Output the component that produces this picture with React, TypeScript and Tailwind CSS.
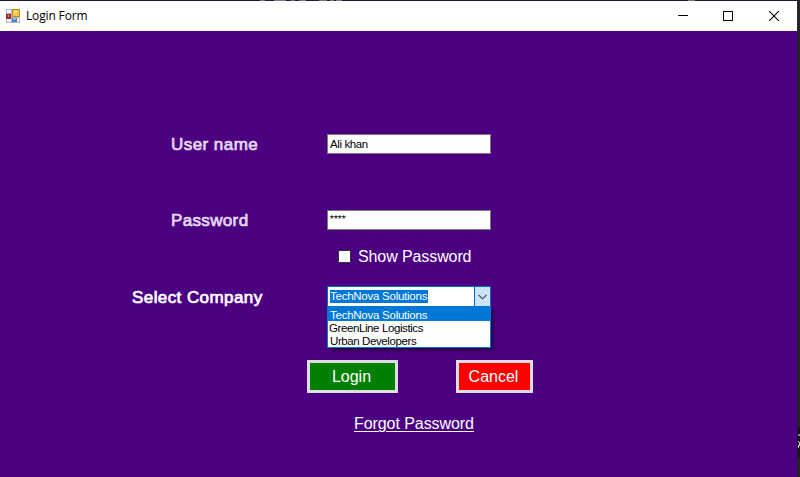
import React from 'react';

const companies = ['TechNova Solutions', 'GreenLine Logistics', 'Urban Developers'];

function AppIcon() {
  return (
    <svg width="14" height="14" viewBox="0 0 14 14" className="block shrink-0" shapeRendering="crispEdges">
      <rect width="14" height="14" fill="#b4b8c0" />
      <rect x="1" y="1" width="4" height="3" fill="#f4f4f6" />
      <rect x="1" y="10" width="4" height="3" fill="#f4f4f6" />
      <rect x="11" y="9" width="2" height="4" fill="#f4f4f6" />
      <rect x="0" y="5" width="5" height="5" fill="#a33030" />
      <rect x="2" y="6" width="1" height="2" fill="#e08080" />
      <rect x="6" y="0" width="8" height="8" fill="#c48a1c" />
      <rect x="7" y="1" width="6" height="6" fill="#f7c846" />
      <rect x="8" y="2" width="3" height="2" fill="#ffe58d" />
      <rect x="6" y="9" width="5" height="4" fill="#3f7fd0" />
      <rect x="7" y="9" width="3" height="2" fill="#8cbcf0" />
    </svg>
  );
}

function TitleBar() {
  return (
    <header className="flex h-[30px] items-center bg-white pl-[6px] text-black">
      <AppIcon />
      <span className="ml-[6px] flex-1 font-['Open_Sans','Noto_Sans',sans-serif] text-[12px] leading-[16px] tracking-[-0.15px]">Login Form</span>
      <div className="flex h-full">
        <span className="flex w-[45px] items-center justify-center">
          <svg width="10" height="10" shapeRendering="crispEdges"><path d="M0 4.5H10" stroke="#000" /></svg>
        </span>
        <span className="flex w-[46px] items-center justify-center">
          <svg width="10" height="10" shapeRendering="crispEdges"><rect x=".5" y=".5" width="9" height="9" fill="none" stroke="#000" /></svg>
        </span>
        <span className="flex w-[46px] items-center justify-center">
          <svg width="10" height="10"><path d="M0 0L10 10M10 0L0 10" stroke="#000" strokeWidth="1.1" /></svg>
        </span>
      </div>
    </header>
  );
}

function CompanySelect() {
  return (
    <div className="relative h-[21px] w-[164px] border border-[#0067c0] bg-white text-[11.5px]">
      <div className="flex h-full items-center justify-between">
        <span className="ml-[2px] h-[13px] w-[98px] whitespace-nowrap bg-[#0078d7] leading-[13px] tracking-[-0.25px] text-white">{companies[0]}</span>
        <span className="flex h-full w-[16px] items-center justify-center border-l border-[#0067c0] bg-[#cce4f7]">
          <svg width="9" height="6" fill="none"><path d="M.5 .8L4.5 4.8L8.5 .8" stroke="#444" strokeWidth="1.1" /></svg>
        </span>
      </div>
      <ul className="absolute -left-px top-[19px] h-[42px] w-[164px] border border-[#0078d7] bg-white text-black shadow-[3px_3px_3px_rgba(0,0,0,0.4)]">
        <li className="h-[14px] bg-[#0078d7] pl-[2px] leading-[16px] tracking-[-0.25px] text-white">{companies[0]}</li>
        <li className="h-[13px] pl-px leading-[14px] tracking-[-0.4px]">{companies[1]}</li>
        <li className="h-[13px] pl-[2px] leading-[14px] tracking-[-0.4px]">{companies[2]}</li>
      </ul>
    </div>
  );
}

/* Slivers of the desktop that stay visible around the window. */
function TopSliver() {
  return (
    <svg width="800" height="1" className="block" shapeRendering="crispEdges">
      <rect width="800" height="1" fill="#1f1838" />
      <path d="M260 .5h5M274 .5h12M291 .5h4M299 .5h7M319 .5h8M330 .5h4M336 .5h6M688 .5h7" stroke="#77727d" />
    </svg>
  );
}

function RightSliver() {
  return (
    <svg width="3" height="476" className="block shrink-0" shapeRendering="crispEdges">
      <rect width="3" height="476" fill="#252429" />
      <rect y="426" width="3" height="30" fill="#17161c" />
      <rect x="1" y="433" width="2" height="2" fill="#8580c8" />
      <path d="M1 440l2 2l-2 5" stroke="#c9c9cf" fill="none" />
    </svg>
  );
}

export default function App() {
  return (
    <div className="h-[477px] w-[800px] overflow-hidden font-['Liberation_Sans',Arial,sans-serif]">
      <TopSliver />
      <div className="flex">
        <div className="w-[797px]">
          <TitleBar />
          <main className="flex h-[446px] flex-col bg-[#4b0082] pt-[103px] text-[16px] leading-[20px] text-white">
            <div className="flex h-[20px] pl-[171px]">
              <label className="w-[156px] pt-px text-[17px] tracking-[0.45px] text-[#e2d9ee] [-webkit-text-stroke:0.7px_#e2d9ee]">User name</label>
              <div className="h-[20px] w-[164px] border border-[#7a7a7a] bg-white pl-[2px] text-[11.5px] leading-[19px] tracking-[-0.4px] text-black">Ali khan</div>
            </div>
            <div className="mt-[56px] flex h-[20px] pl-[171px]">
              <label className="w-[156px] pt-px text-[17px] tracking-[0.35px] text-[#e2d9ee] [-webkit-text-stroke:0.7px_#e2d9ee]">Password</label>
              <div className="h-[20px] w-[164px] border border-[#7a7a7a] bg-white pl-[2px] font-['Roboto',sans-serif] text-[9px] leading-[17px] text-black">****</div>
            </div>
            <div className="mt-[16px] flex h-[20px] items-center pl-[338px]">
              <span className="h-[13px] w-[13px] border border-[#333] bg-white" />
              <span className="ml-[7px] pt-[2px] tracking-[-0.1px]">Show Password</span>
            </div>
            <div className="mt-[20px] flex h-[21px] pl-[132px]">
              <label className="w-[195px] pt-px text-[17px] leading-[22px] tracking-[0.42px] [-webkit-text-stroke:0.7px_white]">Select Company</label>
              <CompanySelect />
            </div>
            <div className="mt-[53px] flex h-[33px] pl-[307px]">
              <button className="h-[33px] w-[91px] border-[3px] border-[#e1dde4] bg-[#008000] pr-[2px] leading-[26px]">Login</button>
              <button className="ml-[58px] h-[33px] w-[77px] border-[3px] border-[#e1dde4] bg-[#ff0000] pr-[2px] leading-[26px]">Cancel</button>
            </div>
            <a className="ml-[354px] mt-[21px] self-start tracking-[-0.07px] underline decoration-1 underline-offset-2">Forgot Password</a>
          </main>
        </div>
        <RightSliver />
      </div>
    </div>
  );
}
